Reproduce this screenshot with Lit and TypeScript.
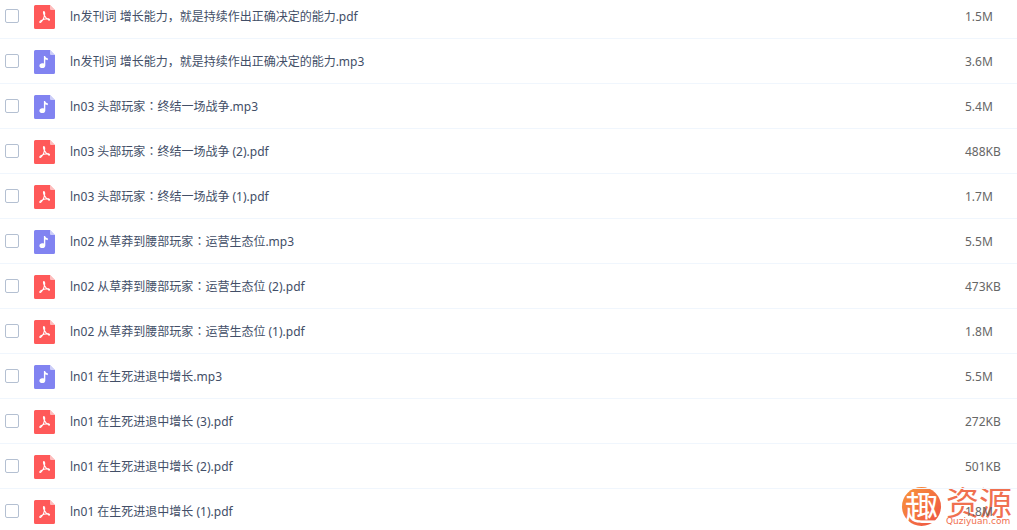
import { LitElement, html, css, svg } from "lit";
import { customElement, property } from "lit/decorators.js";

type FileKind = "pdf" | "mp3";

interface FileEntry {
  name: string;
  kind: FileKind;
  size: string;
}

const FILES: FileEntry[] = [
  { name: "ln发刊词 增长能力，就是持续作出正确决定的能力.pdf", kind: "pdf", size: "1.5M" },
  { name: "ln发刊词 增长能力，就是持续作出正确决定的能力.mp3", kind: "mp3", size: "3.6M" },
  { name: "ln03 头部玩家：终结一场战争.mp3", kind: "mp3", size: "5.4M" },
  { name: "ln03 头部玩家：终结一场战争 (2).pdf", kind: "pdf", size: "488KB" },
  { name: "ln03 头部玩家：终结一场战争 (1).pdf", kind: "pdf", size: "1.7M" },
  { name: "ln02 从草莽到腰部玩家：运营生态位.mp3", kind: "mp3", size: "5.5M" },
  { name: "ln02 从草莽到腰部玩家：运营生态位 (2).pdf", kind: "pdf", size: "473KB" },
  { name: "ln02 从草莽到腰部玩家：运营生态位 (1).pdf", kind: "pdf", size: "1.8M" },
  { name: "ln01 在生死进退中增长.mp3", kind: "mp3", size: "5.5M" },
  { name: "ln01 在生死进退中增长 (3).pdf", kind: "pdf", size: "272KB" },
  { name: "ln01 在生死进退中增长 (2).pdf", kind: "pdf", size: "501KB" },
  { name: "ln01 在生死进退中增长 (1).pdf", kind: "pdf", size: "1.8M" },
];

// The full-width colon sits in the middle of its cell.
const withColon = (name: string) =>
  name.split(/(：)/).map((part) =>
    part === "：" ? html`<span class="colon" lang="zh-TW">${part}</span>` : part);

@customElement("file-icon")
class FileIcon extends LitElement {
  @property() kind: FileKind = "pdf";

  static styles = css`
    :host { display: block; width: 21px; height: 24px; }
    svg { display: block; }
    .pdf { fill: #ff5959; }
    .mp3 { fill: #8183f1; }
    .fold { fill: #fff; fill-opacity: 0.6; }
    .stroke { fill: none; stroke: #fff; stroke-width: 1.1; stroke-linecap: round; stroke-linejoin: round; }
    .note { fill: #fff; }
  `;

  render() {
    const glyph = this.kind === "pdf"
      ? svg`<path class="stroke" d="M9.800 6.500c-.8.600-.1 2.500.6 4.100.9 1.900 2.200 3.300 4.400 4.500.9.100 1-.9.100-1.200-2.800-.5-5.700.4-8.400 2-1.200.9-.8 2 .2 1.400 1.700-1.400 3.500-4.700 4-8.300 0-1.500-.1-2.500-.9-2.500z"/>`
      : svg`<path class="note" d="M9.900 6h1.200c.2 1.400 1.200 1.700 2.700 2.300v2c-.9-.5-1.700-.7-2.500-.8v5.900c0 1.600-1.300 2.700-3 2.700s-2.900-1-2.900-2.400 1.200-2.500 2.800-2.500c.7 0 1.200.1 1.700.3z"/>`;
    return html`<svg width="21" height="24" viewBox="0 0 21 24" aria-hidden="true">
      <path class=${this.kind} d="M1.500 0H16l5 5v17.500a1.500 1.500 0 0 1-1.500 1.500h-18A1.500 1.500 0 0 1 0 22.500v-21A1.500 1.500 0 0 1 1.500 0z"/>
      <path class="fold" d="M16 0l5 5h-4a1 1 0 0 1-1-1z"/>
      ${glyph}
    </svg>`;
  }
}

@customElement("site-mark")
class SiteMark extends LitElement {
  static styles = css`
    :host { display: flex; align-items: center; gap: 5px; color: #f07050; pointer-events: none; }
    .badge {
      display: grid;
      place-items: center;
      width: 39px;
      height: 39px;
      border-radius: 50%;
      background: linear-gradient(135deg, #f9983a, #ee4f45);
      color: #fff;
      font: 400 34px/39px "Noto Sans CJK SC", sans-serif;
    }
    .words { display: flex; flex-direction: column; }
    .title { font: 400 33px/30px "Noto Sans CJK SC", sans-serif; }
    .domain { font: 400 9px/10px "DejaVu Sans", sans-serif; }
  `;

  render() {
    return html`
      <span class="badge">趣</span>
      <div class="words">
        <span class="title">资源</span>
        <span class="domain">Quziyuan.com</span>
      </div>`;
  }
}

@customElement("app-root")
class AppRoot extends LitElement {
  static styles = css`
    :host {
      display: block;
      position: relative;
      max-height: 100vh;
      overflow: hidden;
      background: #fff;
      font: 12px/18px "Noto Sans", "Noto Sans CJK SC", sans-serif;
      color: #424e67;
    }
    .list { position: relative; list-style: none; margin: -6px 0 0; padding: 0; }
    .row {
      display: grid;
      grid-template-columns: 14px 21px 1fr 52px;
      column-gap: 15px;
      align-items: center;
      box-sizing: border-box;
      height: 45px;
      padding: 2px 0 0 5px;
      border-bottom: 1px solid #f0f6fd;
    }
    .check {
      appearance: none;
      box-sizing: border-box;
      width: 14px;
      height: 14px;
      margin: 0 0 2px;
      border: 1px solid #b4c0d2;
      border-radius: 2px;
      background: #fff;
    }
    .check:checked { background: #3b8cff; border-color: #3b8cff; }
    .name { white-space: nowrap; overflow: hidden; text-overflow: ellipsis; }
    .colon { font-family: "Noto Sans CJK TC", sans-serif; line-height: 0; }
    .size { color: #666; }
    .mark { position: absolute; right: 5px; bottom: 4px; }
  `;

  render() {
    return html`
      <site-mark class="mark"></site-mark>
      <ul class="list">
        ${FILES.map((file, i) => html`
          <li class="row">
            <input class="check" type="checkbox" id="file-${i}">
            <file-icon .kind=${file.kind}></file-icon>
            <label class="name" for="file-${i}">${withColon(file.name)}</label>
            <span class="size">${file.size}</span>
          </li>`)}
      </ul>`;
  }
}
